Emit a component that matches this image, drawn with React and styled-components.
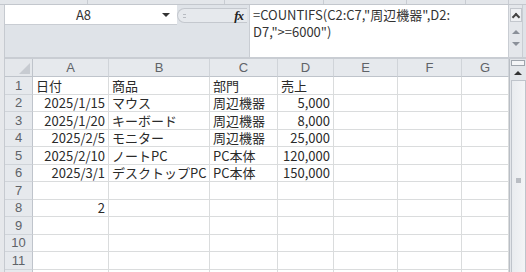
import React from 'react'
import styled, { createGlobalStyle } from 'styled-components'

const GlobalStyle = createGlobalStyle`
  html, body { margin: 0; padding: 0; background: #fff; }
  body { font-family: "Noto Sans CJK JP", "Liberation Sans", sans-serif; }
`

const Window = styled.div`
  width: 526px;
  height: 272px;
  overflow: hidden;
  display: flex;
  flex-direction: column;
  background: #fff;
`

const RibbonEdge = styled.div`
  height: 4px;
  flex: none;
  display: flex;
  background: #e3e6ea;
  border-bottom: 1px solid #c3c7cd;
`

const RibbonGroup = styled.div`
  width: ${p => p.w}px;
  flex: none;
  border-right: 1px solid #c8ccd2;
`

const Body = styled.div`
  flex: 1;
  display: flex;
  min-height: 0;
`

const EdgeStrip = styled.div`
  width: 4px;
  flex: none;
  background: #e6e8eb;
  border-right: 1px solid #c6cad0;
`

const Main = styled.div`
  flex: 1;
  display: flex;
  flex-direction: column;
  min-width: 0;
`

const FormulaBar = styled.div`
  height: 52px;
  flex: none;
  display: flex;
  background: #dfe3e8;
  border-bottom: 2px solid #c9cdd3;
`

const NameArea = styled.div`
  width: 172px;
  flex: none;
  display: flex;
  flex-direction: column;
`

const NameBox = styled.div`
  height: 19px;
  display: flex;
  align-items: center;
  background: #fff;
  border-bottom: 1px solid #c9cdd3;
  font-size: 13px;
  color: #333;
`

const NameText = styled.span`
  flex: 1;
  text-align: center;
`

const DropArrow = styled.span`
  width: 0;
  height: 0;
  margin-right: 7px;
  border-left: 4px solid transparent;
  border-right: 4px solid transparent;
  border-top: 4px solid #333;
`

const FxPill = styled.div`
  width: 70px;
  height: 15px;
  margin-top: 3px;
  flex: none;
  display: flex;
  align-items: center;
  justify-content: space-between;
  box-sizing: border-box;
  border: 1px solid #c4c8ce;
  border-right: none;
  border-radius: 9px 0 0 9px;
  background: #e6e9ed;
  padding: 0 4px 0 5px;
`

const Grip = styled.span`
  width: 3px;
  height: 4px;
  border-top: 1px solid #b8bcc2;
  border-bottom: 1px solid #b8bcc2;
  box-sizing: border-box;
`

const Fx = styled.span`
  font-family: "Liberation Serif", serif;
  font-style: italic;
  font-weight: bold;
  font-size: 13px;
  color: #222;
  letter-spacing: -1px;
`

const FormulaInput = styled.div`
  width: 255px;
  flex: none;
  margin-left: 2px;
  background: #fff;
  border: 1px solid #c9cdd3;
  border-top: none;
  border-bottom: none;
  padding: 1px 0 0 3px;
  font-size: 13px;
  line-height: 17px;
  color: #333;
  white-space: nowrap;
`

const FormulaScroll = styled.div`
  width: 13px;
  flex: none;
  display: flex;
  flex-direction: column;
  align-items: center;
  background: #e4e7eb;
  border-right: 1px solid #c9cdd3;
`

const ScrollButton = styled.div`
  width: 12px;
  height: 14px;
  margin-top: 3px;
  display: flex;
  align-items: center;
  justify-content: center;
  box-sizing: border-box;
  border: 1px solid #c3c7cd;
  background: #eef0f3;
`

const Arrow = styled.span`
  width: 0;
  height: 0;
  margin-top: ${p => p.mt || 0}px;
  border-left: ${p => p.s}px solid transparent;
  border-right: ${p => p.s}px solid transparent;
  ${p => p.down ? `border-top: ${p.s}px solid ${p.c};` : `border-bottom: ${p.s}px solid ${p.c};`}
`

const Caret = styled.span`
  width: 4px;
  height: 4px;
  margin-top: 3px;
  border-left: 2px solid #444;
  border-top: 2px solid #444;
  transform: rotate(45deg);
`

const SheetArea = styled.div`
  flex: 1;
  display: flex;
  min-height: 0;
`

const Grid = styled.div`
  flex: 1;
  display: grid;
  grid-template-columns: 28px 76px 101px 68px 56px 64px 64px 1fr;
  grid-template-rows: 18px;
  grid-auto-rows: 17.5px;
  align-content: start;
  overflow: hidden;
`

const Corner = styled.div`
  position: relative;
  background: #e4e7eb;
  border-right: 1px solid #bfc4cb;
  border-bottom: 1px solid #bfc4cb;
  &::after {
    content: '';
    position: absolute;
    right: 2px;
    bottom: 2px;
    border-left: 11px solid transparent;
    border-bottom: 11px solid #c7cbd1;
  }
`

const ColHead = styled.div`
  display: flex;
  align-items: center;
  justify-content: center;
  background: #e6e9ed;
  border-right: 1px solid #d0d4d9;
  border-bottom: 1px solid #bfc4cb;
  font-family: "Liberation Sans", sans-serif;
  font-size: 13px;
  color: #5f6368;
`

const RowHead = styled.div`
  display: flex;
  align-items: center;
  justify-content: center;
  background: #e6e9ed;
  border-right: 1px solid #bfc4cb;
  border-bottom: 1px solid #d0d4d9;
  font-family: "Liberation Sans", sans-serif;
  font-size: 13px;
  color: #5f6368;
`

const Cell = styled.div`
  display: flex;
  align-items: flex-end;
  justify-content: ${p => p.num ? 'flex-end' : 'flex-start'};
  padding: 0 3px 0 3px;
  border-right: 1px solid #dadcdd;
  border-bottom: 1px solid #dadcdd;
  font-size: 13px;
  line-height: 16px;
  color: #2a2a2a;
  white-space: nowrap;
  min-width: 0;
`

const VScroll = styled.div`
  width: 16px;
  flex: none;
  display: flex;
  flex-direction: column;
  align-items: center;
  background: #e3e6ea;
  border-left: 1px solid #b9bec5;
`

const SplitBox = styled.div`
  width: 14px;
  height: 6px;
  margin-top: 1px;
  box-sizing: border-box;
  border: 1px solid #9ea4ac;
  background: #f4f5f7;
`

const UpButton = styled.div`
  width: 15px;
  height: 13px;
  display: flex;
  align-items: center;
  justify-content: center;
`

const Thumb = styled.div`
  width: 15px;
  flex: 1;
  margin-top: 1px;
  display: flex;
  align-items: center;
  justify-content: center;
  box-sizing: border-box;
  border: 1px solid #bfc4cb;
  border-bottom: none;
  background: linear-gradient(to right, #e9ecef, #f3f4f6);
`

const ThumbGrip = styled.span`
  width: 5px;
  height: 5px;
  margin-top: 8px;
  background: #b9bdc3;
`

const cols = ['A', 'B', 'C', 'D', 'E', 'F', 'G']

const rows = [
  [{ v: '日付' }, { v: '商品' }, { v: '部門' }, { v: '売上' }],
  [{ v: '2025/1/15', n: 1 }, { v: 'マウス' }, { v: '周辺機器' }, { v: '5,000', n: 1 }],
  [{ v: '2025/1/20', n: 1 }, { v: 'キーボード' }, { v: '周辺機器' }, { v: '8,000', n: 1 }],
  [{ v: '2025/2/5', n: 1 }, { v: 'モニター' }, { v: '周辺機器' }, { v: '25,000', n: 1 }],
  [{ v: '2025/2/10', n: 1 }, { v: 'ノートPC' }, { v: 'PC本体' }, { v: '120,000', n: 1 }],
  [{ v: '2025/3/1', n: 1 }, { v: 'デスクトップPC' }, { v: 'PC本体' }, { v: '150,000', n: 1 }],
  [],
  [{ v: '2', n: 1 }],
  [],
  [],
  [],
  []
]

const ribbon = [87, 136, 98, 82, 58, 42]

const App = () => (
  <>
    <GlobalStyle />
    <Window>
      <RibbonEdge>
        {ribbon.map((w, i) => <RibbonGroup key={i} w={w} />)}
      </RibbonEdge>
      <Body>
        <EdgeStrip />
        <Main>
          <FormulaBar>
            <NameArea>
              <NameBox>
                <NameText>A8</NameText>
                <DropArrow />
              </NameBox>
            </NameArea>
            <FxPill>
              <Grip />
              <Fx>fx</Fx>
            </FxPill>
            <FormulaInput>
              <div>=COUNTIFS(C2:C7,"周辺機器",D2:</div>
              <div>D7,"&gt;=6000")</div>
            </FormulaInput>
            <FormulaScroll>
              <ScrollButton><Caret /></ScrollButton>
              <Arrow s={4} c="#8a9099" mt={8} />
              <Arrow s={4} c="#8a9099" mt={8} down />
            </FormulaScroll>
          </FormulaBar>
          <SheetArea>
            <Grid>
              <Corner />
              {cols.map(c => <ColHead key={c}>{c}</ColHead>)}
              {rows.map((r, i) => (
                <React.Fragment key={i}>
                  <RowHead>{i + 1}</RowHead>
                  {cols.map((c, j) => (
                    <Cell key={c} num={r[j] && r[j].n}>{r[j] ? r[j].v : ''}</Cell>
                  ))}
                </React.Fragment>
              ))}
            </Grid>
            <VScroll>
              <SplitBox />
              <UpButton><Arrow s={4} c="#333" /></UpButton>
              <Thumb><ThumbGrip /></Thumb>
            </VScroll>
          </SheetArea>
        </Main>
      </Body>
    </Window>
  </>
)

export default App
